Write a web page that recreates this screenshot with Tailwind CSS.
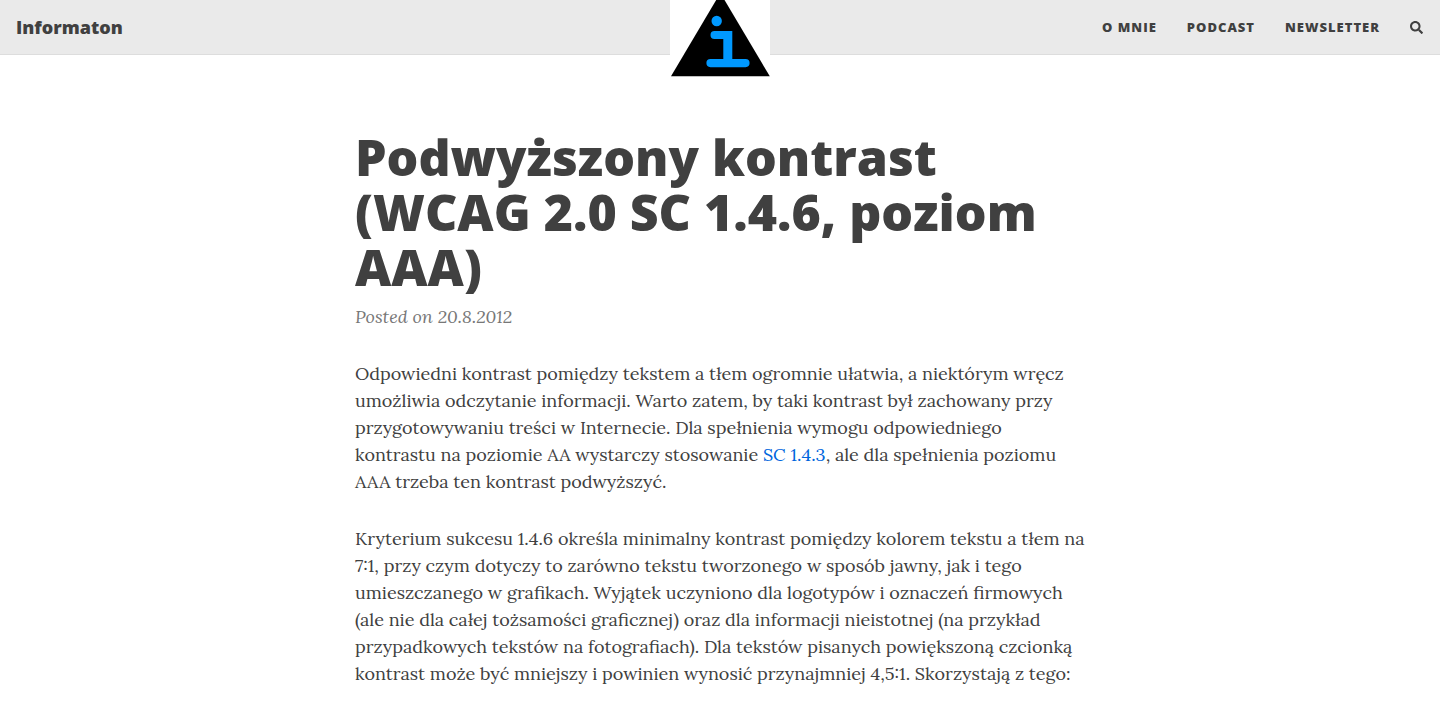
<!DOCTYPE html>
<html lang="pl">
<head>
<meta charset="utf-8">
<meta name="viewport" content="width=device-width, initial-scale=1">
<title>Podwyższony kontrast (WCAG 2.0 SC 1.4.6, poziom AAA)</title>
<script src="https://cdn.jsdelivr.net/npm/@tailwindcss/browser@4"></script>
</head>
<body class="bg-white text-[#404040] font-['Lora','Liberation_Serif',serif] overflow-x-hidden">
<nav class="relative flex h-[55px] items-center justify-between border-b border-[#dddddd] bg-[#eaeaea] px-4 font-['Open_Sans',sans-serif] font-extrabold">
  <a href="#" class="text-lg">Informaton</a>
  <a href="#" aria-label="Informaton" class="absolute top-0 left-1/2 -ml-[50px] block bg-white">
    <svg class="block" width="100" height="80" viewBox="0 0 100 80" aria-hidden="true">
      <path d="M46.200 0H54.500L99.800 76.300H1Z" fill="#000"/>
      <g fill="#0099ff">
        <circle cx="46.700" cy="21" r="5.200"/>
        <path d="M44.500 31H62.300V59H75.500a4.100 4.100 0 0 1 0 8.200H40.500a4.100 4.100 0 0 1 0-8.200H53.300V39H44.500a4 4 0 0 1 0-8Z"/>
      </g>
    </svg>
  </a>
  <ul class="flex items-center gap-[30px] text-[13px] leading-5 tracking-[1px] uppercase">
    <li><a href="#">O mnie</a></li>
    <li><a href="#">Podcast</a></li>
    <li><a href="#">Newsletter</a></li>
    <li><button type="button" aria-label="Szukaj" class="block pr-px">
      <svg class="block" width="13" height="13" viewBox="0 0 512 512" fill="currentColor" aria-hidden="true"><path d="M505 442.700 405.300 343c-4.500-4.500-10.600-7-17-7H372c27.600-35.300 44-79.700 44-128C416 93.100 322.900 0 208 0S0 93.100 0 208s93.100 208 208 208c48.300 0 92.700-16.400 128-44v16.300c0 6.400 2.500 12.500 7 17l99.700 99.700c9.400 9.400 24.600 9.400 33.900 0l28.300-28.300c9.400-9.400 9.400-24.600.1-34zM208 336c-70.700 0-128-57.200-128-128 0-70.700 57.200-128 128-128 70.700 0 128 57.200 128 128 0 70.700-57.200 128-128 128z"/></svg>
    </button></li>
  </ul>
</nav>
<main class="mx-auto max-w-[760px] px-[15px] pt-[75px] pb-6">
  <header>
    <h1 class="font-['Open_Sans',sans-serif] text-[50px] leading-[55px] font-extrabold">Podwyższony kontrast (WCAG 2.0 SC 1.4.6, poziom AAA)</h1>
    <p class="mt-2 text-lg leading-[27px] text-[#777777] italic">Posted on 20.8.2012</p>
  </header>
  <article class="mt-[30px] flex flex-col gap-[30px] text-lg leading-[27px]">
    <p>Odpowiedni kontrast pomiędzy tekstem a tłem ogromnie ułatwia, a niektórym wręcz umożliwia odczytanie informacji. Warto zatem, by taki kontrast był zachowany przy przygotowywaniu treści w Internecie. Dla spełnienia wymogu odpowiedniego kontrastu na poziomie AA wystarczy stosowanie <a href="#" class="text-[#0066dd]">SC 1.4.3</a>, ale dla spełnienia poziomu AAA trzeba ten kontrast podwyższyć.</p>
    <p>Kryterium sukcesu 1.4.6 określa minimalny kontrast pomiędzy kolorem tekstu a tłem na 7:1, przy czym dotyczy to zarówno tekstu tworzonego w sposób jawny, jak i tego umieszczanego w grafikach. Wyjątek uczyniono dla logotypów i oznaczeń firmowych (ale nie dla całej tożsamości graficznej) oraz dla informacji nieistotnej (na przykład przypadkowych tekstów na fotografiach). Dla tekstów pisanych powiększoną czcionką kontrast może być mniejszy i powinien wynosić przynajmniej 4,5:1. Skorzystają z tego:</p>
  </article>
</main>
</body>
</html>
